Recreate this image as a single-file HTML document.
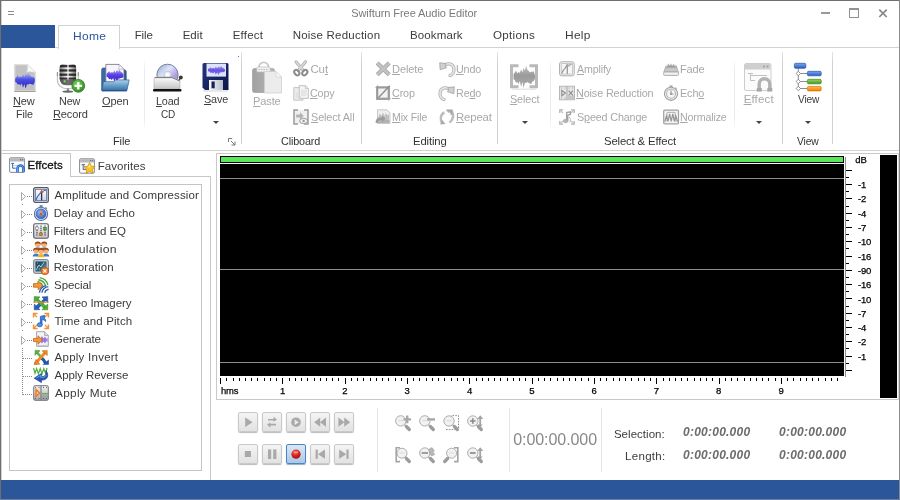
<!DOCTYPE html><html><head><meta charset="utf-8"><title>Swifturn Free Audio Editor</title>
<style>html,body{margin:0;padding:0}body{width:900px;height:500px;position:relative;overflow:hidden;background:#fff;font-family:'Liberation Sans',sans-serif;font-size:12px}u{text-decoration:underline;text-underline-offset:1px}svg{overflow:visible}</style></head><body><div id="app" style="position:absolute;left:0;top:0;width:900px;height:500px;will-change:transform">
<div style="position:absolute;left:0px;top:0px;width:900px;height:1px;background:#6f6f6f;"></div>
<div style="position:absolute;left:0px;top:0px;width:1px;height:500px;background:#6f6f6f;"></div>
<div style="position:absolute;left:1px;top:1px;width:1px;height:498px;background:rgba(120,120,120,0.35);"></div>
<div style="position:absolute;left:899px;top:0px;width:1px;height:500px;background:#8a8a8a;"></div>
<div style="position:absolute;left:0px;top:499px;width:900px;height:1px;background:#6f7f98;"></div>
<div style="position:absolute;top:3px;line-height:20px;font-size:11px;color:#7a7a7a;white-space:nowrap;left:351.24px;letter-spacing:-0.074px;">Swifturn Free Audio Editor</div>
<div style="position:absolute;left:8px;top:11px;width:6px;height:1px;background:#8c8c8c;"></div>
<div style="position:absolute;left:8px;top:14px;width:6px;height:1px;background:#8c8c8c;"></div>
<div style="position:absolute;left:821px;top:12px;width:9px;height:2px;background:#999;"></div>
<div style="position:absolute;left:849px;top:8px;width:8px;height:7px;border:1px solid #929292;border-top:2px solid #929292"></div>
<svg style="position:absolute;left:878px;top:8px" width="10" height="10" viewBox="0 0 10 10"><path d="M1.3 1.6 L8.7 9 M8.7 1.6 L1.3 9" stroke="#878787" stroke-width="1.7" fill="none"/></svg>
<div style="position:absolute;left:1px;top:25px;width:54px;height:23px;background:#2b579a;"></div>
<div style="position:absolute;left:55px;top:47px;width:844px;height:1px;background:#d2d2d2;"></div>
<div style="position:absolute;left:58px;top:25px;width:60px;height:23px;border:1px solid #d2d2d2;border-bottom:none;background:#fff"></div>
<div style="position:absolute;top:26px;line-height:20px;font-size:11.5px;color:#2b579a;white-space:nowrap;left:72.60px;letter-spacing:0.300px;transform:scaleX(1.0422);transform-origin:0 0;">Home</div>
<div style="position:absolute;top:25px;line-height:20px;font-size:11.5px;color:#3c3c3c;white-space:nowrap;left:134.64px;letter-spacing:-0.051px;">File</div>
<div style="position:absolute;top:25px;line-height:20px;font-size:11.5px;color:#3c3c3c;white-space:nowrap;left:182.64px;letter-spacing:0.072px;">Edit</div>
<div style="position:absolute;top:25px;line-height:20px;font-size:11.5px;color:#3c3c3c;white-space:nowrap;left:232.64px;letter-spacing:0.245px;">Effect</div>
<div style="position:absolute;top:25px;line-height:20px;font-size:11.5px;color:#3c3c3c;white-space:nowrap;left:292.64px;letter-spacing:0.221px;">Noise Reduction</div>
<div style="position:absolute;top:25px;line-height:20px;font-size:11.5px;color:#3c3c3c;white-space:nowrap;left:410.04px;letter-spacing:0.115px;">Bookmark</div>
<div style="position:absolute;top:25px;line-height:20px;font-size:11.5px;color:#3c3c3c;white-space:nowrap;left:493.12px;letter-spacing:0.300px;transform:scaleX(1.0095);transform-origin:0 0;">Options</div>
<div style="position:absolute;top:25px;line-height:20px;font-size:11.5px;color:#3c3c3c;white-space:nowrap;left:564.61px;letter-spacing:0.300px;transform:scaleX(1.0375);transform-origin:0 0;">Help</div>
<div style="position:absolute;left:1px;top:150px;width:898px;height:1px;background:#d2d2d2;"></div>
<div style="position:absolute;left:241px;top:52px;width:1px;height:92px;background:linear-gradient(#e4e4e4,#d0d0d0 12%,#d0d0d0);"></div>
<div style="position:absolute;left:361px;top:52px;width:1px;height:92px;background:linear-gradient(#e4e4e4,#d0d0d0 12%,#d0d0d0);"></div>
<div style="position:absolute;left:497px;top:52px;width:1px;height:92px;background:linear-gradient(#e4e4e4,#d0d0d0 12%,#d0d0d0);"></div>
<div style="position:absolute;left:782px;top:52px;width:1px;height:92px;background:linear-gradient(#e4e4e4,#d0d0d0 12%,#d0d0d0);"></div>
<div style="position:absolute;left:832px;top:52px;width:1px;height:92px;background:linear-gradient(#e4e4e4,#d0d0d0 12%,#d0d0d0);"></div>
<div style="position:absolute;left:238px;top:56px;width:1px;height:1px;background:#707070;"></div>
<div style="position:absolute;left:144px;top:59px;width:1px;height:71px;background:linear-gradient(#fff,#ececec 15%,#ececec 85%,#fff);"></div>
<div style="position:absolute;left:550px;top:59px;width:1px;height:71px;background:linear-gradient(#fff,#ececec 15%,#ececec 85%,#fff);"></div>
<div style="position:absolute;left:734px;top:59px;width:1px;height:71px;background:linear-gradient(#fff,#ececec 15%,#ececec 85%,#fff);"></div>
<div style="position:absolute;top:131px;line-height:20px;font-size:11.5px;color:#333;white-space:nowrap;left:112.68px;letter-spacing:-0.150px;transform:scaleX(0.9578);transform-origin:0 0;">File</div>
<div style="position:absolute;top:131px;line-height:20px;font-size:11.5px;color:#333;white-space:nowrap;left:281.46px;letter-spacing:-0.150px;transform:scaleX(0.9395);transform-origin:0 0;">Cliboard</div>
<div style="position:absolute;top:131px;line-height:20px;font-size:11.5px;color:#333;white-space:nowrap;left:412.66px;letter-spacing:-0.150px;transform:scaleX(0.9832);transform-origin:0 0;">Editing</div>
<div style="position:absolute;top:131px;line-height:20px;font-size:11.5px;color:#333;white-space:nowrap;left:603.93px;letter-spacing:-0.150px;transform:scaleX(0.9855);transform-origin:0 0;">Select &amp; Effect</div>
<div style="position:absolute;top:131px;line-height:20px;font-size:11.5px;color:#333;white-space:nowrap;left:796.60px;letter-spacing:-0.150px;transform:scaleX(0.8980);transform-origin:0 0;">View</div>
<svg style="position:absolute;left:228px;top:138px" width="8" height="8" viewBox="0 0 8 8"><path d="M0.5 4 V0.5 H4" stroke="#777" fill="none"/><path d="M3 3 L7 7 M7 3.5 V7 H3.5" stroke="#777" fill="none"/></svg>
<svg style="position:absolute;left:9px;top:62px" width="32" height="32" viewBox="0 0 32 32"><path d="M5.6 2.6 H18.4 L26.4 10.6 V28.6 H5.6 Z" fill="#c2c2c2" stroke="#e0e0e0" stroke-width="1.4"/><path d="M18.4 2.6 C18.8 6 18.6 8.6 17.6 10 C20.5 9.4 23.5 9.8 26.4 10.6 Z" fill="#fafafa" stroke="#d8d8d8" stroke-width=".5"/><path d="M5.4 29.3 H26.6" stroke="#8e8e8e" stroke-width="1"/><linearGradient id="gw1" x1="0" y1="0" x2="0" y2="1"><stop offset="0" stop-color="#b8c0f6"/><stop offset=".45" stop-color="#4a50e0"/><stop offset="1" stop-color="#2a22c6"/></linearGradient><path d="M6.2 16.3 L7.5 14.9 L8.8 13.3 L10.1 15.6 L11.4 14.3 L12.7 15.2 L14.0 12.3 L15.3 14.9 L16.7 11.4 L18.0 13.7 L19.3 10.3 L20.6 13.3 L21.9 14.2 L23.2 15.3 L24.5 14.8 L25.8 16.5 L25.8 19.7 L24.5 22.7 L23.2 22.4 L21.9 22.1 L20.6 21.7 L19.3 22.4 L18.0 22.3 L16.7 26.4 L15.3 21.9 L14.0 25.7 L12.7 21.3 L11.4 23.6 L10.1 22.0 L8.8 22.6 L7.5 20.4 L6.2 19.9Z" fill="url(#gw1)"/></svg>
<div style="position:absolute;top:91px;line-height:20px;font-size:11.5px;color:#3c3c3c;white-space:nowrap;left:12.68px;letter-spacing:-0.150px;transform:scaleX(0.9567);transform-origin:0 0;"><u>N</u>ew</div>
<div style="position:absolute;top:104px;line-height:20px;font-size:11.5px;color:#3c3c3c;white-space:nowrap;left:15.51px;letter-spacing:-0.150px;transform:scaleX(0.9339);transform-origin:0 0;">File</div>
<svg style="position:absolute;left:55px;top:62px" width="32" height="32" viewBox="0 0 32 32"><defs><linearGradient id="gm1" x1="0" y1="0" x2="1" y2="0"><stop offset="0" stop-color="#6a6a6a"/><stop offset=".3" stop-color="#c8c8c8"/><stop offset=".5" stop-color="#fafafa"/><stop offset=".7" stop-color="#c4c4c4"/><stop offset="1" stop-color="#5a5a5a"/></linearGradient><linearGradient id="gm2" x1="0" y1="0" x2="1" y2="0"><stop offset="0" stop-color="#1c1c1c"/><stop offset=".42" stop-color="#3a3a3a"/><stop offset=".5" stop-color="#e6e6e6"/><stop offset=".58" stop-color="#3a3a3a"/><stop offset="1" stop-color="#1c1c1c"/></linearGradient><clipPath id="cm1"><path d="M4.6 6 Q4.6 2 8.6 2 H17.1 Q21.1 2 21.1 6 V16 Q21.1 23.4 12.85 23.4 Q4.6 23.4 4.6 16 Z"/></clipPath><radialGradient id="gg1" cx=".4" cy=".35" r=".7"><stop offset="0" stop-color="#7ad060"/><stop offset="1" stop-color="#2a8a1c"/></radialGradient></defs><path d="M2.4 11 V18 C2.4 23.6 7 26.8 12.85 26.8 C18.7 26.8 23.3 23.6 23.3 18 V11" fill="none" stroke="#c2c2c2" stroke-width="1.2"/><path d="M2.4 10 V14 M23.3 10 V14" stroke="#8c8c8c" stroke-width="1"/><rect x="11.8" y="26.4" width="2.2" height="3" fill="#8a8a8a"/><ellipse cx="12.85" cy="29.6" rx="5.5" ry="1.2" fill="#6a6a6a"/><g clip-path="url(#cm1)"><rect x="4" y="1" width="18" height="23" fill="url(#gm1)"/><rect x="4" y="3" width="18" height="2.3" fill="url(#gm2)"/><rect x="4" y="7.3" width="18" height="2.3" fill="url(#gm2)"/><rect x="4" y="11.6" width="18" height="2.2" fill="url(#gm2)"/><rect x="4" y="15.6" width="18" height="2" fill="url(#gm2)"/><rect x="4" y="17.6" width="18" height="6" fill="#4a4a4a" opacity=".8"/></g><circle cx="9.6" cy="19.3" r="1.1" fill="#7ee04a"/><circle cx="23.3" cy="23.8" r="6.4" fill="url(#gg1)" stroke="#2c7a1c" stroke-width=".8"/><path d="M23.3 20 V27.6 M19.5 23.8 H27.1" stroke="#fff" stroke-width="2.3"/></svg>
<div style="position:absolute;top:91px;line-height:20px;font-size:11.5px;color:#3c3c3c;white-space:nowrap;left:58.70px;letter-spacing:-0.150px;transform:scaleX(0.9383);transform-origin:0 0;">New</div>
<div style="position:absolute;top:104px;line-height:20px;font-size:11.5px;color:#3c3c3c;white-space:nowrap;left:52.88px;letter-spacing:-0.150px;transform:scaleX(0.9592);transform-origin:0 0;"><u>R</u>ecord</div>
<svg style="position:absolute;left:99.5px;top:62px" width="32" height="32" viewBox="0 0 32 32"><defs><linearGradient id="gf1" x1="0" y1="0" x2="0" y2="1"><stop offset="0" stop-color="#b2d2e8"/><stop offset=".5" stop-color="#6aa0c8"/><stop offset="1" stop-color="#356fa8"/></linearGradient><linearGradient id="gf0" x1="0" y1="0" x2="1" y2="0"><stop offset="0" stop-color="#3c6ea4"/><stop offset="1" stop-color="#2a5a94"/></linearGradient></defs><path d="M1.7 7.6 Q1.7 6 3.2 6 H8 L9.6 8 H24.6 Q26.2 8 26.2 9.6 V28.4 H1.7 Z" fill="url(#gf0)" stroke="#234e86" stroke-width=".7"/><path d="M5.8 2.4 H19 L24 7.4 V21 H5.8 Z" fill="#f6f4fc" stroke="#6e6e78" stroke-width=".8"/><path d="M19 2.4 C19.3 4.6 19.1 6.2 18.4 7.2 C20.4 6.8 22.2 7 24 7.4 Z" fill="#fff" stroke="#8a8a94" stroke-width=".5"/><linearGradient id="gw2" x1="0" y1="0" x2="0" y2="1"><stop offset="0" stop-color="#b0a8f4"/><stop offset=".45" stop-color="#5a3ee0"/><stop offset="1" stop-color="#3a24cc"/></linearGradient><path d="M6.6 11.8 L7.9 10.6 L9.2 9.2 L10.5 11.1 L11.8 10.0 L13.1 10.8 L14.4 8.4 L15.6 10.7 L16.9 7.8 L18.2 9.8 L19.5 7.4 L20.8 9.8 L22.1 10.6 L23.4 12.3 L23.4 15.0 L22.1 16.1 L20.8 16.0 L19.5 16.6 L18.2 16.7 L16.9 20.0 L15.6 16.5 L14.4 19.8 L13.1 16.1 L11.8 18.1 L10.5 16.7 L9.2 17.2 L7.9 15.3 L6.6 14.8Z" fill="url(#gw2)"/><path d="M3.4 19.7 H14 L15.6 17.9 H29.2 L26.9 28.6 H1.9 Z" fill="url(#gf1)" stroke="#2a5f9a" stroke-width=".7"/><path d="M2 28.9 H26.8" stroke="#1f4a82" stroke-width=".9"/></svg>
<div style="position:absolute;top:91px;line-height:20px;font-size:11.5px;color:#3c3c3c;white-space:nowrap;left:102.14px;letter-spacing:-0.150px;transform:scaleX(0.9592);transform-origin:0 0;"><u>O</u>pen</div>
<svg style="position:absolute;left:152px;top:62px" width="32" height="32" viewBox="0 0 32 32"><defs><linearGradient id="gcd" x1="0" y1="0" x2="1" y2="1"><stop offset="0" stop-color="#8fa2d2"/><stop offset=".4" stop-color="#dfe6f8"/><stop offset=".7" stop-color="#b09ee6"/><stop offset="1" stop-color="#7f92cc"/></linearGradient><linearGradient id="gbx" x1="0" y1="0" x2="0" y2="1"><stop offset="0" stop-color="#ffffff"/><stop offset="1" stop-color="#c4c4c4"/></linearGradient></defs><circle cx="15.5" cy="12.8" r="10.6" fill="url(#gcd)" stroke="#76809e" stroke-width="1"/><circle cx="15.5" cy="12.8" r="3.6" fill="#e8ecf8" stroke="#a8b4d8" stroke-width=".6"/><circle cx="15.5" cy="12.8" r="1.8" fill="#fff"/><path d="M25.5 20 L28.6 15.6" stroke="#333" stroke-width="1.3"/><circle cx="28.8" cy="15.4" r="2" fill="#3a3a3a"/><path d="M2 17.5 Q2 15 4.5 15 H20 L28 18.5 V27 H2 Z" fill="url(#gbx)" stroke="#b4b4b4" stroke-width=".7"/><path d="M2.6 15.6 H20 L27.8 19" fill="none" stroke="#6a6a6a" stroke-width=".9"/><rect x="1" y="27" width="28.5" height="2.6" rx="1" fill="#111"/></svg>
<div style="position:absolute;top:91px;line-height:20px;font-size:11.5px;color:#3c3c3c;white-space:nowrap;left:156.10px;letter-spacing:-0.150px;transform:scaleX(0.9397);transform-origin:0 0;"><u>L</u>oad</div>
<div style="position:absolute;top:104px;line-height:20px;font-size:11.5px;color:#3c3c3c;white-space:nowrap;left:161.10px;letter-spacing:-0.150px;transform:scaleX(0.8715);transform-origin:0 0;">CD</div>
<svg style="position:absolute;left:199.5px;top:62px" width="32" height="32" viewBox="0 0 32 32"><defs><linearGradient id="gsv" x1="0" y1="0" x2="1" y2="1"><stop offset="0" stop-color="#24347e"/><stop offset="1" stop-color="#0c164a"/></linearGradient><linearGradient id="gsh" x1="0" y1="0" x2="1" y2="0"><stop offset="0" stop-color="#fafafa"/><stop offset="1" stop-color="#b9bcc6"/></linearGradient></defs><path d="M2.5 2.5 Q2.5 1 4 1 H27 Q28.5 1 28.5 2.5 V28 H5 L2.5 25.5 Z" fill="url(#gsv)"/><rect x="6.5" y="1.6" width="19.5" height="13" fill="#dde3f9"/><linearGradient id="gw3" x1="0" y1="0" x2="0" y2="1"><stop offset="0" stop-color="#b0a8f2"/><stop offset=".45" stop-color="#6a50e2"/><stop offset="1" stop-color="#8078e6"/></linearGradient><path d="M8.0 7.0 L9.3 6.2 L10.6 5.2 L11.9 6.6 L13.2 5.8 L14.5 6.4 L15.8 4.6 L17.2 6.2 L18.5 4.2 L19.8 5.6 L21.1 3.9 L22.4 5.6 L23.7 6.2 L25.0 7.4 L25.0 9.3 L23.7 10.2 L22.4 10.0 L21.1 10.5 L19.8 10.5 L18.5 12.9 L17.2 10.4 L15.8 12.8 L14.5 10.1 L13.2 11.5 L11.9 10.6 L10.6 10.9 L9.3 9.5 L8.0 9.2Z" fill="url(#gw3)"/><rect x="9" y="18" width="14" height="10" fill="url(#gsh)"/><rect x="11.5" y="19.5" width="3.2" height="6.8" fill="#16215c"/><path d="M3 29 H28" stroke="#c0c4d0" stroke-width="1" opacity=".7"/></svg>
<div style="position:absolute;top:89px;line-height:20px;font-size:11.5px;color:#3c3c3c;white-space:nowrap;left:203.55px;letter-spacing:-0.150px;transform:scaleX(0.9416);transform-origin:0 0;"><u>S</u>ave</div>
<svg style="position:absolute;left:212.5px;top:121.0px" width="6" height="3" viewBox="0 0 6 3"><path d="M0 0 H6 L3 3 Z" fill="#444"/></svg>
<svg style="position:absolute;left:250.5px;top:62px" width="32" height="32" viewBox="0 0 32 32"><defs><linearGradient id="gps" x1="0" y1="0" x2="1" y2="0"><stop offset="0" stop-color="#a0a0a0"/><stop offset="1" stop-color="#b6b6b6"/></linearGradient></defs><rect x="1.5" y="6.5" width="22" height="24" rx="2" fill="url(#gps)" stroke="#a4a4a4" stroke-width=".8"/><path d="M8 5 A4.7 4.7 0 0 1 17.4 5" fill="none" stroke="#cacaca" stroke-width="1.8"/><rect x="5.8" y="5" width="13.5" height="5" rx="1" fill="#f0f0f0" stroke="#bcbcbc" stroke-width=".7"/><path d="M7.5 7.5 H17.8" stroke="#bdbdbd" stroke-width="1" stroke-dasharray="1.5 1"/><path d="M13.5 9.5 H25 L30.5 15 V31 H13.5 Z" fill="#ececec" stroke="#cfcfcf" stroke-width=".8"/><path d="M25 9.5 V15 H30.5 Z" fill="#fafafa" stroke="#cfcfcf" stroke-width=".6"/></svg>
<div style="position:absolute;top:91px;line-height:20px;font-size:11.5px;color:#a8a8a8;white-space:nowrap;left:252.68px;letter-spacing:-0.150px;transform:scaleX(0.9641);transform-origin:0 0;"><u>P</u>aste</div>
<svg style="position:absolute;left:509px;top:62px" width="32" height="32" viewBox="0 0 32 32"><path d="M9.5 3.7 H2.5 V24.7 H9.5" fill="none" stroke="#b9b9b9" stroke-width="3"/><path d="M20.5 3.7 H27.5 V24.7 H20.5" fill="none" stroke="#b9b9b9" stroke-width="3"/><path d="M3 27.2 H27" stroke="#dcdcdc" stroke-width="1"/><linearGradient id="gw4" x1="0" y1="0" x2="0" y2="1"><stop offset="0" stop-color="#bdbdbd"/><stop offset=".45" stop-color="#9a9a9a"/><stop offset="1" stop-color="#b0b0b0"/></linearGradient><path d="M4.5 12.3 L5.8 10.6 L7.0 8.5 L8.3 11.6 L9.6 9.8 L10.8 11.0 L12.1 7.2 L13.4 10.5 L14.6 5.7 L15.9 8.7 L17.1 3.8 L18.4 7.8 L19.7 9.0 L20.9 10.4 L22.2 9.5 L23.5 10.1 L24.7 9.1 L26.0 13.5 L26.0 16.7 L24.7 19.1 L23.5 19.2 L22.2 22.3 L20.9 21.5 L19.7 20.9 L18.4 20.1 L17.1 20.9 L15.9 20.8 L14.6 26.2 L13.4 20.0 L12.1 25.1 L10.8 19.1 L9.6 22.2 L8.3 20.0 L7.0 20.8 L5.8 18.0 L4.5 17.3Z" fill="url(#gw4)"/></svg>
<div style="position:absolute;top:89px;line-height:20px;font-size:11.5px;color:#a8a8a8;white-space:nowrap;left:510.15px;letter-spacing:-0.150px;transform:scaleX(0.9451);transform-origin:0 0;"><u>S</u>elect</div>
<svg style="position:absolute;left:522px;top:121.0px" width="6" height="3" viewBox="0 0 6 3"><path d="M0 0 H6 L3 3 Z" fill="#444"/></svg>
<svg style="position:absolute;left:743px;top:62px" width="32" height="32" viewBox="0 0 32 32"><rect x="1.5" y="1.5" width="26.5" height="27" rx="1.5" fill="#fbfbfb" stroke="#cdcdcd"/><path d="M2 7.5 V3 Q2 2 3 2 H26.5 Q27.5 2 27.5 3 V7.5 Z" fill="#cfcfcf"/><rect x="20" y="3.6" width="1.8" height="1.8" fill="#9d9d9d"/><rect x="23.6" y="3.6" width="1.8" height="1.8" fill="#9d9d9d"/><path d="M5 11.5 H10 M7.5 12 V18.5 H12 M7.5 13.5 H24" stroke="#c0c0c0" stroke-width="1" fill="none"/><path d="M16.2 28 V22 A5.3 5.3 0 0 1 26.8 22 V28" fill="none" stroke="#b2b2b2" stroke-width="3.4"/><rect x="13.8" y="26" width="5" height="3.6" fill="#a8a8a8"/><rect x="24.3" y="26" width="5" height="3.6" fill="#a8a8a8"/></svg>
<div style="position:absolute;top:89px;line-height:20px;font-size:11.5px;color:#a8a8a8;white-space:nowrap;left:743.64px;letter-spacing:0.165px;"><u>E</u>ffect</div>
<svg style="position:absolute;left:756px;top:121.0px" width="6" height="3" viewBox="0 0 6 3"><path d="M0 0 H6 L3 3 Z" fill="#444"/></svg>
<svg style="position:absolute;left:792px;top:62px" width="32" height="32" viewBox="0 0 32 32"><defs><linearGradient id="gvb" x1="0" y1="0" x2="0" y2="1"><stop offset="0" stop-color="#7aa8ee"/><stop offset="1" stop-color="#2a5cc0"/></linearGradient><linearGradient id="gvg" x1="0" y1="0" x2="0" y2="1"><stop offset="0" stop-color="#9ad860"/><stop offset="1" stop-color="#3e9a1e"/></linearGradient><linearGradient id="gvo" x1="0" y1="0" x2="0" y2="1"><stop offset="0" stop-color="#ffc050"/><stop offset="1" stop-color="#f08000"/></linearGradient></defs><path d="M6.3 6.5 V26.5 M6.3 11.5 H15 M6.3 19.5 H15 M6.3 26.5 H15" stroke="#808080" stroke-width=".9" fill="none"/><rect x="2.4" y="1.3" width="11.4" height="5" rx="1.2" fill="url(#gvb)" stroke="#2450a8" stroke-width=".7"/><rect x="15.4" y="9.3" width="13.8" height="4.5" rx="1.2" fill="url(#gvb)" stroke="#2450a8" stroke-width=".7"/><rect x="15.4" y="17.3" width="13.8" height="4.5" rx="1.2" fill="url(#gvg)" stroke="#35851a" stroke-width=".7"/><rect x="15.4" y="24.4" width="13.8" height="4.5" rx="1.2" fill="url(#gvo)" stroke="#d87000" stroke-width=".7"/><path d="M6.3 9.3 L8.5 11.5 L6.3 13.7 L4.1 11.5 Z M6.3 17.3 L8.5 19.5 L6.3 21.7 L4.1 19.5 Z M6.3 24.3 L8.5 26.5 L6.3 28.7 L4.1 26.5 Z" fill="#fff" stroke="#777" stroke-width=".8"/></svg>
<div style="position:absolute;top:89px;line-height:20px;font-size:11.5px;color:#3c3c3c;white-space:nowrap;left:797.60px;letter-spacing:-0.150px;transform:scaleX(0.8816);transform-origin:0 0;">View</div>
<svg style="position:absolute;left:805px;top:121.0px" width="6" height="3" viewBox="0 0 6 3"><path d="M0 0 H6 L3 3 Z" fill="#444"/></svg>
<svg style="position:absolute;left:293px;top:61px" width="16" height="16" viewBox="0 0 16 16"><path d="M3 0.8 L10.4 9.6 M12.6 0.8 L5.2 9.6" stroke="#a8a8a8" stroke-width="3" stroke-linecap="round"/><path d="M3 0.8 L10.4 9.6 M12.6 0.8 L5.2 9.6" stroke="#dcdcdc" stroke-width="1.5" stroke-linecap="round"/><ellipse cx="3.8" cy="11.6" rx="2.2" ry="3" fill="none" stroke="#8c8c8c" stroke-width="2" transform="rotate(-40 3.8 11.6)"/><ellipse cx="11.8" cy="11.6" rx="2.2" ry="3" fill="none" stroke="#8c8c8c" stroke-width="2" transform="rotate(40 11.8 11.6)"/></svg>
<div style="position:absolute;top:59px;line-height:20px;font-size:11.5px;color:#a8a8a8;white-space:nowrap;left:310.43px;letter-spacing:-0.125px;">Cu<u>t</u></div>
<svg style="position:absolute;left:293px;top:85px" width="16" height="16" viewBox="0 0 16 16"><path d="M0.8 2.6 H7 L10 5.6 V15.2 H0.8 Z" fill="#ededed" stroke="#bdbdbd" stroke-width=".9"/><path d="M6.2 0.6 H12.4 L15.4 3.6 V13.4 H6.2 Z" fill="#f3f3f3" stroke="#bdbdbd" stroke-width=".9"/><path d="M12.4 0.6 V3.6 H15.4" fill="none" stroke="#bdbdbd" stroke-width=".8"/><path d="M8 6 H13.5 M8 8 H13.5 M8 10 H13.5 M2.5 8 H5 M2.5 10 H5 M2.5 12 H8" stroke="#d6d6d6" stroke-width=".9"/></svg>
<div style="position:absolute;top:83px;line-height:20px;font-size:11.5px;color:#a8a8a8;white-space:nowrap;left:310.47px;letter-spacing:-0.150px;transform:scaleX(0.9299);transform-origin:0 0;"><u>C</u>opy</div>
<svg style="position:absolute;left:293px;top:109px" width="16" height="16" viewBox="0 0 16 16"><rect x="1" y="1" width="14" height="14" fill="#efefef"/><path d="M5 1 H1 V15 H5 M11 1 H15 V15 H11" fill="none" stroke="#9c9c9c" stroke-width="1.5"/><path d="M3.2 5.5 H7 V3.2 L10.8 7 L7 10.8 V8.5 H3.2 Z" fill="#b4b4b4"/><ellipse cx="10.6" cy="12" rx="4" ry="2.6" fill="#f6f6f6" stroke="#9c9c9c" stroke-width="1"/><circle cx="10.6" cy="12" r="1.2" fill="#9c9c9c"/></svg>
<div style="position:absolute;top:107px;line-height:20px;font-size:11.5px;color:#a8a8a8;white-space:nowrap;left:310.55px;letter-spacing:-0.150px;transform:scaleX(0.9476);transform-origin:0 0;"><u>S</u>elect All</div>
<svg style="position:absolute;left:375px;top:61px" width="16" height="16" viewBox="0 0 16 16"><path d="M2.2 2 L14.2 13.8 M14.2 2 L2.2 13.8" stroke="#a4a4a4" stroke-width="4.2"/><path d="M2.2 2 L14.2 13.8 M14.2 2 L2.2 13.8" stroke="#c2c2c2" stroke-width="2.6"/></svg>
<div style="position:absolute;top:59px;line-height:20px;font-size:11.5px;color:#a8a8a8;white-space:nowrap;left:392.07px;letter-spacing:-0.150px;transform:scaleX(0.9657);transform-origin:0 0;"><u>D</u>elete</div>
<svg style="position:absolute;left:375px;top:85px" width="16" height="16" viewBox="0 0 16 16"><path d="M0.4 2.4 H3 M2.6 0.2 V3" stroke="#aaa" stroke-width="1"/><rect x="2.2" y="2.4" width="11.6" height="11.4" fill="#f2f2f2" stroke="#9a9a9a" stroke-width="2.2"/><path d="M3.4 12.8 L14.8 0.8" stroke="#8e8e8e" stroke-width="1.4"/><path d="M13.8 13.6 H15.8 M13.6 13.6 V15.6" stroke="#aaa" stroke-width="1"/></svg>
<div style="position:absolute;top:83px;line-height:20px;font-size:11.5px;color:#a8a8a8;white-space:nowrap;left:392.46px;letter-spacing:-0.150px;transform:scaleX(0.9397);transform-origin:0 0;"><u>C</u>rop</div>
<svg style="position:absolute;left:375px;top:109px" width="16" height="16" viewBox="0 0 16 16"><path d="M2.5 0.8 H12 L15 3.8 V14.5 H2.5 Z" fill="#efefef" stroke="#c4c4c4" stroke-width=".9"/><path d="M3.5 7.5 L5 4.5 L6.5 7 L8 3.5 L9.5 7 L11 4 L12.5 6.5 L14 5 V11 H3.5 Z" fill="#c0c0c0"/><path d="M3 11 H14.5 V14 H3 Z" fill="#b2b2b2"/><path d="M0.6 13.5 C0.6 9 4 8 7 8.6 V6.6 L10.6 9.8 L7 13 V11 C4.5 10.6 2.5 11.5 2.6 14.6 Z" fill="#9c9c9c"/></svg>
<div style="position:absolute;top:107px;line-height:20px;font-size:11.5px;color:#a8a8a8;white-space:nowrap;left:392.12px;letter-spacing:-0.150px;transform:scaleX(0.9143);transform-origin:0 0;"><u>M</u>ix File</div>
<svg style="position:absolute;left:439px;top:61px" width="16" height="16" viewBox="0 0 16 16"><path d="M5.6 4.6 C8.6 1.2 15 2.8 15 8.4 C15 11.6 13.4 13.6 11 14.6" fill="none" stroke="#b2b2b2" stroke-width="3.2" stroke-linecap="round"/><path d="M5.6 4.6 C8.6 1.2 15 2.8 15 8.4 C15 11.6 13.4 13.6 11 14.6" fill="none" stroke="#e6e6e6" stroke-width="1.6" stroke-linecap="round"/><path d="M0.7 1.8 L7.2 2.6 L6.2 5 L7.6 6.6 L1.2 8.8 Z" fill="#d0d0d0" stroke="#a8a8a8" stroke-width=".9"/></svg>
<div style="position:absolute;top:59px;line-height:20px;font-size:11.5px;color:#a8a8a8;white-space:nowrap;left:456.19px;letter-spacing:-0.150px;transform:scaleX(0.9334);transform-origin:0 0;"><u>U</u>ndo</div>
<svg style="position:absolute;left:439px;top:85px" width="16" height="16" viewBox="0 0 16 16"><g transform="translate(16 0) scale(-1 1)"><path d="M5.6 4.6 C8.6 1.2 15 2.8 15 8.4 C15 11.6 13.4 13.6 11 14.6" fill="none" stroke="#b2b2b2" stroke-width="3.2" stroke-linecap="round"/><path d="M5.6 4.6 C8.6 1.2 15 2.8 15 8.4 C15 11.6 13.4 13.6 11 14.6" fill="none" stroke="#e6e6e6" stroke-width="1.6" stroke-linecap="round"/><path d="M0.7 1.8 L7.2 2.6 L6.2 5 L7.6 6.6 L1.2 8.8 Z" fill="#d0d0d0" stroke="#a8a8a8" stroke-width=".9"/></g></svg>
<div style="position:absolute;top:83px;line-height:20px;font-size:11.5px;color:#a8a8a8;white-space:nowrap;left:456.10px;letter-spacing:-0.150px;transform:scaleX(0.9369);transform-origin:0 0;">Re<u>d</u>o</div>
<svg style="position:absolute;left:439px;top:109px" width="16" height="16" viewBox="0 0 16 16"><path d="M3.4 14 C0.6 10.5 1.4 5.5 5.4 3.4" fill="none" stroke="#bdbdbd" stroke-width="2.4"/><path d="M1.2 15.4 L6.6 15 L2.8 10.6 Z" fill="#ababab"/><path d="M9 2.6 H13 C14.6 6 14.4 10.5 10.4 13.6" fill="none" stroke="#bdbdbd" stroke-width="2.4"/><path d="M7.4 0.4 H13.6 V5.8 H11.4 V2.6 H7.4 Z" fill="#a8a8a8"/></svg>
<div style="position:absolute;top:107px;line-height:20px;font-size:11.5px;color:#a8a8a8;white-space:nowrap;left:456.05px;letter-spacing:-0.150px;transform:scaleX(0.9893);transform-origin:0 0;"><u>R</u>epeat</div>
<svg style="position:absolute;left:559px;top:61px" width="16" height="16" viewBox="0 0 16 16"><rect x="0.6" y="0.8" width="14.6" height="14" rx="2" fill="#f7f7f7" stroke="#ababab" stroke-width="1"/><rect x="2.3" y="2.5" width="11.2" height="10.6" fill="none" stroke="#c4c4c4" stroke-width=".9"/><path d="M2.6 12.8 C5 7 8 4 12.6 3.4" fill="none" stroke="#a0a0a0" stroke-width="1.2"/><path d="M8.3 4.4 V13" stroke="#9a9a9a" stroke-width="1.3"/><path d="M6.4 5.8 L8.3 3 L10.2 5.8" fill="none" stroke="#a2a2a2" stroke-width="1"/></svg>
<div style="position:absolute;top:59px;line-height:20px;font-size:11.5px;color:#a8a8a8;white-space:nowrap;left:577.00px;letter-spacing:-0.150px;transform:scaleX(0.9249);transform-origin:0 0;"><u>A</u>mplify</div>
<svg style="position:absolute;left:559px;top:85px" width="16" height="16" viewBox="0 0 16 16"><rect x="0.5" y="1.2" width="15" height="13.6" fill="#e6e6e6" stroke="#b2b2b2" stroke-width=".9"/><path d="M8 1.2 V14.8" stroke="#a8a8a8" stroke-width="1"/><path d="M2.8 5.4 L6.4 8.1 L2.8 10.8 Z" fill="none" stroke="#8e8e8e" stroke-width="1.1"/><path d="M9.6 5.6 L14 10.6 M14 5.6 L9.6 10.6" stroke="#8e8e8e" stroke-width="1.1"/><path d="M2 3 h.9 M5.6 3 h.9 M9.6 3 h.9 M13 3 h.9 M2 13 h.9 M5.6 13 h.9 M9.6 13 h.9 M13 13 h.9" stroke="#9a9a9a" stroke-width=".9"/><rect x="8.5" y="11" width="6.5" height="3.4" fill="#c6c6c6"/></svg>
<div style="position:absolute;top:83px;line-height:20px;font-size:11.5px;color:#a8a8a8;white-space:nowrap;left:576.10px;letter-spacing:-0.150px;transform:scaleX(0.9429);transform-origin:0 0;"><u>N</u>oise Reduction</div>
<svg style="position:absolute;left:559px;top:109px" width="16" height="16" viewBox="0 0 16 16"><path d="M0.8 4 V0.8 H4 M12 0.8 H15.2 V4 M15.2 12 V15.2 H12 M4 15.2 H0.8 V12" fill="none" stroke="#b4b4b4" stroke-width="1.3"/><path d="M1 1 L4 4 M15 1 L12 4 M15 15 L12 12 M1 15 L4 12" stroke="#c0c0c0" stroke-width="1.1"/><path d="M7.6 11.6 V3.6 L11.4 2.8 V5.4 L8.8 6 V12" fill="none" stroke="#a2a2a2" stroke-width="1.3"/><ellipse cx="6.6" cy="12" rx="2.3" ry="1.8" fill="#b4b4b4" stroke="#a0a0a0" stroke-width=".6"/><path d="M10 8 C12 9 12 12 10.4 13.4" fill="none" stroke="#bcbcbc" stroke-width="1"/></svg>
<div style="position:absolute;top:107px;line-height:20px;font-size:11.5px;color:#a8a8a8;white-space:nowrap;left:576.55px;letter-spacing:-0.150px;transform:scaleX(0.9359);transform-origin:0 0;">S<u>p</u>eed Change</div>
<svg style="position:absolute;left:663px;top:61px" width="16" height="16" viewBox="0 0 16 16"><path d="M1.6 9.6 L2.4 4.4 L3.2 6.4 L4 3 L4.8 5.6 L5.6 2.2 L6.4 5 L7.2 2.6 L8 5.2 L8.8 2.4 L9.6 5.2 L10.4 2.6 L11.2 5.6 L12 3 L12.8 6 L13.6 4 L14.6 9.6 Z" fill="#9c9c9c"/><path d="M2.4 6.6 H13.8 L15.4 11 H0.8 Z" fill="#c8c8c8" stroke="#a6a6a6" stroke-width=".7"/><rect x="0.7" y="11" width="14.8" height="3.4" rx=".8" fill="#f0f0f0" stroke="#a6a6a6" stroke-width=".9"/></svg>
<div style="position:absolute;top:59px;line-height:20px;font-size:11.5px;color:#a8a8a8;white-space:nowrap;left:679.68px;letter-spacing:-0.150px;transform:scaleX(0.9602);transform-origin:0 0;">Fade</div>
<svg style="position:absolute;left:663px;top:85px" width="16" height="16" viewBox="0 0 16 16"><rect x="6.6" y="0.4" width="3" height="2" fill="#a8a8a8"/><path d="M12.2 2.6 L13.6 4" stroke="#a8a8a8" stroke-width="1.2"/><circle cx="8" cy="8.8" r="6.6" fill="#e9e9e9" stroke="#a4a4a4" stroke-width="1.1"/><circle cx="8" cy="8.8" r="4.5" fill="#f6f6f6" stroke="#b6b6b6" stroke-width="1.1"/><path d="M8 5.6 V9 H10.6" fill="none" stroke="#9a9a9a" stroke-width="1.2"/><circle cx="8" cy="9" r="1.1" fill="#9a9a9a"/></svg>
<div style="position:absolute;top:83px;line-height:20px;font-size:11.5px;color:#a8a8a8;white-space:nowrap;left:679.70px;letter-spacing:-0.150px;transform:scaleX(0.9438);transform-origin:0 0;">Ech<u>o</u></div>
<svg style="position:absolute;left:663px;top:109px" width="16" height="16" viewBox="0 0 16 16"><rect x="0.7" y="1.2" width="14.8" height="13.6" rx="1" fill="#f4f4f4" stroke="#a2a2a2" stroke-width="1.2"/><path d="M2.4 12 H4 V3.4 H12.2 V12 H13.8" fill="none" stroke="#b4b4b4" stroke-width="1"/><path d="M1.6 12.6 L3.4 7 L5 12.4 L6.6 5 L8.2 12.4 L9.8 5 L11.4 12.4 L12.8 7 L14.6 12.6" fill="none" stroke="#969696" stroke-width="1.2"/></svg>
<div style="position:absolute;top:107px;line-height:20px;font-size:11.5px;color:#a8a8a8;white-space:nowrap;left:679.71px;letter-spacing:-0.150px;transform:scaleX(0.9244);transform-origin:0 0;"><u>N</u>ormalize</div>
<div style="position:absolute;left:1px;top:153px;width:70px;height:1px;background:#c9c9c9;"></div>
<div style="position:absolute;left:70px;top:153px;width:1px;height:24px;background:#c9c9c9;"></div>
<div style="position:absolute;left:70px;top:176px;width:141px;height:1px;background:#c9c9c9;"></div>
<div style="position:absolute;left:210px;top:176px;width:1px;height:304px;background:#c9c9c9;"></div>
<svg style="position:absolute;left:9px;top:157px" width="16" height="16" viewBox="0 0 16 16"><rect x="0.6" y="0.8" width="14.8" height="14.6" rx="1.2" fill="#fbfcfe" stroke="#868a92" stroke-width="1"/><path d="M1.1 4.4 V2 Q1.1 1.3 1.8 1.3 H14.2 Q14.9 1.3 14.9 2 V4.4 Z" fill="#b6b8bc"/><rect x="11" y="2.2" width="1.1" height="1.1" fill="#5a6278"/><rect x="12.9" y="2.2" width="1.1" height="1.1" fill="#5a6278"/><path d="M2.2 6.4 H5 M3.6 6.6 V11.2 H6.8" fill="none" stroke="#3a66b4" stroke-width="1"/><path d="M4 8.6 H10" stroke="#b8c0d0" stroke-width=".8"/><path d="M8.5 15.2 V11.5 A2.95 2.95 0 0 1 14.4 11.5 V15.2" fill="none" stroke="#1f5cc0" stroke-width="2.6"/><path d="M8.5 15.2 V11.5 A2.95 2.95 0 0 1 14.4 11.5 V15.2" fill="none" stroke="#6fb0f4" stroke-width=".9"/></svg>
<div style="position:absolute;top:155px;line-height:20px;font-size:11.5px;color:#111;white-space:nowrap;-webkit-text-stroke:0.3px #111;left:27.54px;letter-spacing:0.060px;">Effcets</div>
<svg style="position:absolute;left:79px;top:158px" width="16" height="16" viewBox="0 0 16 16"><rect x="0.6" y="0.8" width="14.8" height="14.4" rx="1.2" fill="#fcfcfc" stroke="#888a90" stroke-width="1"/><path d="M1.1 4.4 V2 Q1.1 1.3 1.8 1.3 H14.2 Q14.9 1.3 14.9 2 V4.4 Z" fill="#b8b8bc"/><rect x="11" y="2" width="1.2" height="1.2" fill="#77797e"/><rect x="13" y="2" width="1.2" height="1.2" fill="#77797e"/><path d="M2.6 6.6 H6 M4.2 6.8 V11.4 H7" fill="none" stroke="#6a7690" stroke-width="1.1"/><path d="M10.6 4.6 L12.3 8.2 L16.2 8.7 L13.4 11.4 L14.1 15.3 L10.6 13.4 L7.1 15.3 L7.8 11.4 L5 8.7 L8.9 8.2 Z" fill="#f6c626" stroke="#c8921a" stroke-width=".8"/><path d="M10.6 6.4 L11.7 9 L9 9.4 Z" fill="#fff0a0"/></svg>
<div style="position:absolute;top:156px;line-height:20px;font-size:11.5px;color:#3c3c3c;white-space:nowrap;left:97.64px;letter-spacing:0.062px;">Favorites</div>
<div style="position:absolute;left:9px;top:184px;width:193px;height:287px;border:1px solid #c4c4c4;box-sizing:border-box"></div>
<svg style="position:absolute;left:0;top:0" width="210" height="480" viewBox="0 0 210 480">
<rect x="22" y="204" width="1" height="1" fill="#8a8a8a"/>
<rect x="22" y="222" width="1" height="1" fill="#8a8a8a"/>
<rect x="22" y="240" width="1" height="1" fill="#8a8a8a"/>
<rect x="22" y="258" width="1" height="1" fill="#8a8a8a"/>
<rect x="22" y="276" width="1" height="1" fill="#8a8a8a"/>
<rect x="22" y="294" width="1" height="1" fill="#8a8a8a"/>
<rect x="22" y="312" width="1" height="1" fill="#8a8a8a"/>
<rect x="22" y="330" width="1" height="1" fill="#8a8a8a"/>
<path d="M22.5 348 V395" stroke="#8a8a8a" stroke-width="1" stroke-dasharray="1 1" fill="none"/>
<path d="M27 196.5 H33" stroke="#8a8a8a" stroke-width="1" stroke-dasharray="1 1" fill="none"/>
<path d="M21.5 192.5 L25.5 196.5 L21.5 200.5 Z" fill="#fff" stroke="#a8a8a8" stroke-width="1"/>
<path d="M27 214.5 H33" stroke="#8a8a8a" stroke-width="1" stroke-dasharray="1 1" fill="none"/>
<path d="M21.5 210.5 L25.5 214.5 L21.5 218.5 Z" fill="#fff" stroke="#a8a8a8" stroke-width="1"/>
<path d="M27 232.5 H33" stroke="#8a8a8a" stroke-width="1" stroke-dasharray="1 1" fill="none"/>
<path d="M21.5 228.5 L25.5 232.5 L21.5 236.5 Z" fill="#fff" stroke="#a8a8a8" stroke-width="1"/>
<path d="M27 250.5 H33" stroke="#8a8a8a" stroke-width="1" stroke-dasharray="1 1" fill="none"/>
<path d="M21.5 246.5 L25.5 250.5 L21.5 254.5 Z" fill="#fff" stroke="#a8a8a8" stroke-width="1"/>
<path d="M27 268.5 H33" stroke="#8a8a8a" stroke-width="1" stroke-dasharray="1 1" fill="none"/>
<path d="M21.5 264.5 L25.5 268.5 L21.5 272.5 Z" fill="#fff" stroke="#a8a8a8" stroke-width="1"/>
<path d="M27 286.5 H33" stroke="#8a8a8a" stroke-width="1" stroke-dasharray="1 1" fill="none"/>
<path d="M21.5 282.5 L25.5 286.5 L21.5 290.5 Z" fill="#fff" stroke="#a8a8a8" stroke-width="1"/>
<path d="M27 304.5 H33" stroke="#8a8a8a" stroke-width="1" stroke-dasharray="1 1" fill="none"/>
<path d="M21.5 300.5 L25.5 304.5 L21.5 308.5 Z" fill="#fff" stroke="#a8a8a8" stroke-width="1"/>
<path d="M27 322.5 H33" stroke="#8a8a8a" stroke-width="1" stroke-dasharray="1 1" fill="none"/>
<path d="M21.5 318.5 L25.5 322.5 L21.5 326.5 Z" fill="#fff" stroke="#a8a8a8" stroke-width="1"/>
<path d="M27 340.5 H33" stroke="#8a8a8a" stroke-width="1" stroke-dasharray="1 1" fill="none"/>
<path d="M21.5 336.5 L25.5 340.5 L21.5 344.5 Z" fill="#fff" stroke="#a8a8a8" stroke-width="1"/>
<path d="M23 358.5 H33" stroke="#8a8a8a" stroke-width="1" stroke-dasharray="1 1" fill="none"/>
<path d="M23 376.5 H33" stroke="#8a8a8a" stroke-width="1" stroke-dasharray="1 1" fill="none"/>
<path d="M23 394.5 H33" stroke="#8a8a8a" stroke-width="1" stroke-dasharray="1 1" fill="none"/>
</svg>
<div style="position:absolute;left:10px;top:185px;width:188.8px;height:285px;overflow:hidden">
<div style="position:absolute;top:0px;line-height:20px;font-size:11.5px;color:#3a3a3a;white-space:nowrap;left:44.60px;letter-spacing:0.094px;">Amplitude and Compression</div>
<div style="position:absolute;top:18px;line-height:20px;font-size:11.5px;color:#3a3a3a;white-space:nowrap;left:43.64px;letter-spacing:0.005px;">Delay and Echo</div>
<div style="position:absolute;top:36px;line-height:20px;font-size:11.5px;color:#3a3a3a;white-space:nowrap;left:43.64px;letter-spacing:-0.082px;">Filters and EQ</div>
<div style="position:absolute;top:54px;line-height:20px;font-size:11.5px;color:#3a3a3a;white-space:nowrap;left:43.58px;letter-spacing:0.300px;transform:scaleX(1.0624);transform-origin:0 0;">Modulation</div>
<div style="position:absolute;top:72px;line-height:20px;font-size:11.5px;color:#3a3a3a;white-space:nowrap;left:43.64px;letter-spacing:0.128px;">Restoration</div>
<div style="position:absolute;top:90px;line-height:20px;font-size:11.5px;color:#3a3a3a;white-space:nowrap;left:44.12px;letter-spacing:-0.085px;">Special</div>
<div style="position:absolute;top:108px;line-height:20px;font-size:11.5px;color:#3a3a3a;white-space:nowrap;left:44.12px;letter-spacing:-0.100px;">Stereo Imagery</div>
<div style="position:absolute;top:126px;line-height:20px;font-size:11.5px;color:#3a3a3a;white-space:nowrap;left:44.41px;letter-spacing:0.113px;">Time and Pitch</div>
<div style="position:absolute;top:144px;line-height:20px;font-size:11.5px;color:#3a3a3a;white-space:nowrap;left:44.02px;letter-spacing:-0.137px;">Generate</div>
<div style="position:absolute;top:162px;line-height:20px;font-size:11.5px;color:#3a3a3a;white-space:nowrap;left:44.60px;letter-spacing:0.249px;">Apply Invert</div>
<div style="position:absolute;top:180px;line-height:20px;font-size:11.5px;color:#3a3a3a;white-space:nowrap;left:44.60px;letter-spacing:-0.081px;">Apply Reverse</div>
<div style="position:absolute;top:198px;line-height:20px;font-size:11.5px;color:#3a3a3a;white-space:nowrap;left:44.60px;letter-spacing:0.300px;transform:scaleX(1.0265);transform-origin:0 0;">Apply Mute</div>
</div>
<svg style="position:absolute;left:33px;top:187px" width="16" height="16" viewBox="0 0 16 16"><defs><linearGradient id="ta1" x1="0" y1="0" x2="0" y2="1"><stop offset="0" stop-color="#ffffff"/><stop offset="1" stop-color="#c8d6f0"/></linearGradient></defs><rect x="0.7" y="0.7" width="14.6" height="14.6" rx="1.6" fill="#f2f4f8" stroke="#4e5668" stroke-width="1.3"/><rect x="2.4" y="2.4" width="11.2" height="11.2" fill="url(#ta1)" stroke="#6e7a98" stroke-width=".9"/><path d="M2.8 13.2 C5 7.4 8 4.4 13 3" fill="none" stroke="#3a5ea8" stroke-width="1.2"/><path d="M8.6 4.4 V13.4" stroke="#2a3350" stroke-width="1.3"/><path d="M6.6 5.8 L8.6 2.6 L10.6 5.8 Z" fill="#e8502a"/></svg>
<svg style="position:absolute;left:33px;top:205px" width="16" height="16" viewBox="0 0 16 16"><defs><radialGradient id="td1" cx=".4" cy=".35" r=".75"><stop offset="0" stop-color="#8fb8f4"/><stop offset="1" stop-color="#2a58b8"/></radialGradient></defs><rect x="6.6" y="0.2" width="3" height="2.2" fill="#6a7ea8"/><path d="M12.4 2.4 L13.8 3.8" stroke="#6a7ea8" stroke-width="1.3"/><circle cx="8" cy="8.9" r="6.6" fill="#dfe7f6" stroke="#5a74ac" stroke-width="1.1"/><circle cx="8" cy="8.9" r="4.9" fill="url(#td1)" stroke="#2d55a8" stroke-width=".7"/><path d="M8 5.6 V9 H11" fill="none" stroke="#f0a040" stroke-width="1.2"/><circle cx="8" cy="9" r="1.2" fill="#e8501e"/></svg>
<svg style="position:absolute;left:33px;top:223px" width="16" height="16" viewBox="0 0 16 16"><defs><linearGradient id="tf1" x1="0" y1="0" x2="0" y2="1"><stop offset="0" stop-color="#fdfdfd"/><stop offset="1" stop-color="#bfc1c8"/></linearGradient></defs><rect x="0.7" y="0.7" width="14.6" height="14.6" rx="1.6" fill="url(#tf1)" stroke="#55585f" stroke-width="1.1"/><path d="M4 2.4 V13.6 M8 2.4 V13.6 M12 2.4 V13.6" stroke="#3c3e46" stroke-width="1.1" stroke-dasharray="1.4 .8"/><rect x="2.6" y="4" width="2.8" height="2.6" fill="#fff" stroke="#666" stroke-width=".5"/><rect x="6.6" y="10" width="2.8" height="2.6" fill="#f08a1e" stroke="#8a4a10" stroke-width=".5"/><rect x="10.6" y="4.4" width="2.8" height="2.6" fill="#56b43a" stroke="#2a6a1a" stroke-width=".5"/></svg>
<svg style="position:absolute;left:33px;top:241px" width="16" height="16" viewBox="0 0 16 16"><path d="M1.4 9.4 C1.4 5.2 8.2 5.2 8.2 9.4 Z" fill="#3a7ad0"/><circle cx="4.8" cy="3.5" r="2.8" fill="#f0b478"/><path d="M1.6999999999999997 3.8000000000000003 A3.1 3.3 0 0 1 7.9 3.8000000000000003 Q6.3 2.0 4.8 2.6 Q3.3 2.0 1.6999999999999997 3.8000000000000003Z" fill="#a04a1c"/><path d="M7.799999999999999 9.4 C7.799999999999999 5.2 14.6 5.2 14.6 9.4 Z" fill="#3a7ad0"/><circle cx="11.2" cy="3.5" r="2.8" fill="#f0b478"/><path d="M8.1 3.8000000000000003 A3.1 3.3 0 0 1 14.299999999999999 3.8000000000000003 Q12.7 2.0 11.2 2.6 Q9.7 2.0 8.1 3.8000000000000003Z" fill="#a04a1c"/><path d="M-0.2999999999999998 15.600000000000001 C-0.2999999999999998 11.4 6.5 11.4 6.5 15.600000000000001 Z" fill="#3a7ad0"/><circle cx="3.1" cy="9.700000000000001" r="2.8" fill="#f0b478"/><path d="M0.0 10.0 A3.1 3.3 0 0 1 6.2 10.0 Q4.6 8.200000000000001 3.1 8.8 Q1.6 8.200000000000001 0.0 10.0Z" fill="#a04a1c"/><path d="M9.5 15.600000000000001 C9.5 11.4 16.3 11.4 16.3 15.600000000000001 Z" fill="#3a7ad0"/><circle cx="12.9" cy="9.700000000000001" r="2.8" fill="#f0b478"/><path d="M9.8 10.0 A3.1 3.3 0 0 1 16.0 10.0 Q14.4 8.200000000000001 12.9 8.8 Q11.4 8.200000000000001 9.8 10.0Z" fill="#a04a1c"/><path d="M4.43 16.21 C4.43 11.799999999999999 11.57 11.799999999999999 11.57 16.21 Z" fill="#e8b428"/><circle cx="8" cy="10.014999999999999" r="2.94" fill="#f0b478"/><path d="M4.744999999999999 10.33 A3.2550000000000003 3.465 0 0 1 11.255 10.33 Q9.575 8.44 8 9.069999999999999 Q6.425 8.44 4.744999999999999 10.33Z" fill="#a04a1c"/></svg>
<svg style="position:absolute;left:33px;top:259px" width="16" height="16" viewBox="0 0 16 16"><defs><linearGradient id="tr1" x1="0" y1="0" x2="1" y2="1"><stop offset="0" stop-color="#1c3a5c"/><stop offset="1" stop-color="#3f8a9a"/></linearGradient></defs><rect x="0.7" y="0.7" width="14.6" height="13.6" rx="1.4" fill="#d2d4da" stroke="#6e7480" stroke-width="1"/><rect x="2.4" y="2.4" width="11.2" height="10.2" fill="url(#tr1)"/><path d="M3 11 L6 6 L8 8 L11 3.4 M4 4 h.8 M9.6 10.4 h.8 M6 10 h.8 M11.6 7 h.8 M4.4 7.6 h.8" stroke="#bfe6f0" stroke-width=".8" fill="none"/><circle cx="11.9" cy="12" r="3.8" fill="#f07a28" stroke="#c2521a" stroke-width=".7"/><path d="M10.3 10.4 L13.5 13.6 M13.5 10.4 L10.3 13.6" stroke="#fff" stroke-width="1.3"/></svg>
<svg style="position:absolute;left:33px;top:277px" width="16" height="16" viewBox="0 0 16 16"><path d="M6.6 0.6 C11.4 1.4 14 4 14.8 8 M5.4 2.8 C9.4 3.4 11.8 5.6 12.6 9.2 M4.6 5 C7.6 5.6 9.4 7.2 10.2 10" fill="none" stroke="#4aa83a" stroke-width="1.4"/><path d="M15.4 9.6 C12 10 9.6 12.2 8.8 15.6 M13.2 8.6 C9.4 9.4 7 11.8 6.4 15.6 M15.6 12.2 C13.6 12.8 12.2 14 11.6 15.8" fill="none" stroke="#2a5cb0" stroke-width="1.4"/><path d="M0.5 6.6 H5.2 V4 L9.8 8.4 L5.2 12.8 V10.2 H0.5 Z" fill="#f59a32" stroke="#c8621a" stroke-width=".8"/></svg>
<svg style="position:absolute;left:33px;top:295px" width="16" height="16" viewBox="0 0 16 16"><path d="M11.6 12.4 L4.1 4.6" stroke="#4cb03a" stroke-width="3.2" stroke-linecap="round"/><path d="M1.2 1.6 L7.0 1.9 L1.2 7.4 Z" fill="#4cb03a" stroke="#2a7a1e" stroke-width=".5"/><path d="M4.4 12.4 L11.9 4.6" stroke="#2a62c0" stroke-width="3.2" stroke-linecap="round"/><path d="M14.8 1.6 L14.8 7.4 L9.0 1.9 Z" fill="#2a62c0" stroke="#1a4490" stroke-width=".5"/><path d="M8.0 8.0 L4.2 11.8" stroke="#2a62c0" stroke-width="3.2" stroke-linecap="round"/><path d="M1.2 14.8 L1.3 9.0 L7.0 14.7 Z" fill="#2a62c0" stroke="#1a4490" stroke-width=".5"/><path d="M8.0 8.0 L11.8 11.8" stroke="#4cb03a" stroke-width="3.2" stroke-linecap="round"/><path d="M14.8 14.8 L9.0 14.7 L14.7 9.0 Z" fill="#4cb03a" stroke="#2a7a1e" stroke-width=".5"/><path d="M0.4 7.2 H15.6" stroke="#f08a28" stroke-width="1.1"/></svg>
<svg style="position:absolute;left:33px;top:313px" width="16" height="16" viewBox="0 0 16 16"><path d="M0.6 4.6 V0.6 H4.6 M11.4 0.6 H15.4 V4.6 M15.4 11.4 V15.4 H11.4 M4.6 15.4 H0.6 V11.4" fill="none" stroke="#f59030" stroke-width="1.5"/><path d="M1 1 L4 4 M15 1 L12 4 M15 15 L12 12 M1 15 L4 12" stroke="#f59030" stroke-width="1.2"/><path d="M7.4 11.4 V3.4 L11.6 2.4 V5.6 C11.6 5.6 13 6.6 12.6 8.6 C12 6.8 9 6.6 9 6.4 V11.8" fill="#3a86e0" stroke="#1f5ab4" stroke-width=".8"/><ellipse cx="6.8" cy="11.8" rx="2.5" ry="2" fill="#4a96ea" stroke="#1f5ab4" stroke-width=".8"/></svg>
<svg style="position:absolute;left:33px;top:331px" width="16" height="16" viewBox="0 0 16 16"><path d="M3.6 0.7 H11.6 L15.3 4.4 V15.3 H3.6 Z" fill="#f4f4f6" stroke="#9a9aa2" stroke-width=".9"/><path d="M11.6 0.7 V4.4 H15.3" fill="#e0e0e4" stroke="#9a9aa2" stroke-width=".8"/><path d="M4.4 8.6 L6 5.6 L7.4 7.6 L9 5 L10.4 7.4 L12 5.6 L13.4 7.8 L14.6 7 V11 L13.4 10 L12 12.4 L10.4 10.4 L9 12.6 L7.4 10.2 L6 12 L4.4 9.6 Z" fill="#9a78e0"/><path d="M4 14.4 H15" stroke="#c8c8d0" stroke-width="1"/><path d="M0.5 7.4 H5 V4.8 L9.4 9 L5 13.2 V10.6 H0.5 Z" fill="#f59a32" stroke="#c8621a" stroke-width=".8"/></svg>
<svg style="position:absolute;left:33px;top:349px" width="16" height="16" viewBox="0 0 16 16"><path d="M13.0 14.0 L4.5 4.0" stroke="#5ab848" stroke-width="2.6" stroke-linecap="round"/><path d="M2.2 1.2 L7.1 1.7 L1.9 6.2 Z" fill="#5ab848" stroke="#2e8022" stroke-width=".5"/><path d="M8 8.6 C10 10 11.6 11.6 12.6 14.6" stroke="#2456b0" stroke-width="3" fill="none"/><path d="M9.4 15.8 H15.8 V10.6 Z" fill="#2456b0"/><path d="M2.6 14.2 L11.6 4.2" stroke="#f08a28" stroke-width="3" stroke-linecap="round"/><path d="M14.2 1.4 L14.3 6.6 L9.0 1.8 Z" fill="#f08a28" stroke="#b85a14" stroke-width=".5"/><path d="M1 15.4 L6.8 15.2 L3 10.4 Z" fill="#f08a28" stroke="#b85a14" stroke-width=".5"/></svg>
<svg style="position:absolute;left:33px;top:367px" width="16" height="16" viewBox="0 0 16 16"><path d="M0.6 1 L2 6.4 L3.6 1.6 L5.4 6.8 L7.2 1.6 L9 6.8 L10.8 1.6 L12.6 6.4 L14 1" fill="none" stroke="#52b23e" stroke-width="1.2"/><path d="M13 3.6 C17 9 13.6 13.6 8.4 13 V15.6 L1.2 11.2 L8.4 6.6 V9.4 C11.6 10 14 7.6 13 3.6 Z" fill="#2458b8" stroke="#173e8a" stroke-width=".7"/><path d="M3.4 11 L7.6 8.4 V10.2 C10 10.8 12.4 10 13.4 8" fill="none" stroke="#7aa8ee" stroke-width=".9"/></svg>
<svg style="position:absolute;left:33px;top:385px" width="16" height="16" viewBox="0 0 16 16"><defs><linearGradient id="tm1" x1="0" y1="0" x2="0" y2="1"><stop offset="0" stop-color="#f4f4f4"/><stop offset="1" stop-color="#a8aaae"/></linearGradient></defs><rect x="0.7" y="0.7" width="14.6" height="14.6" rx="1.4" fill="url(#tm1)" stroke="#70747c" stroke-width="1"/><path d="M8 1 V15" stroke="#70747c" stroke-width="1.1"/><path d="M3 4.6 L6.6 8 L3 11.4 Z" fill="#fbd0a0" stroke="#f07818" stroke-width="1.4"/><path d="M9 8.6 H15" stroke="#6ab04a" stroke-width="1.3"/><rect x="8.6" y="9.4" width="6.2" height="5.2" fill="#8e9296" opacity=".55"/><path d="M2.2 2.4 h.9 M5.6 2.4 h.9 M10 2.4 h.9 M13 2.4 h.9 M2.2 13.6 h.9 M5.6 13.6 h.9 M10 13.6 h.9 M13 13.6 h.9" stroke="#444" stroke-width=".9"/></svg>
<div style="position:absolute;left:216px;top:153px;width:683px;height:1px;background:#c9c9c9;"></div>
<div style="position:absolute;left:216px;top:153px;width:1px;height:247px;background:#c9c9c9;"></div>
<div style="position:absolute;left:216px;top:399px;width:683px;height:1px;background:#c9c9c9;"></div>
<div style="position:absolute;left:898px;top:153px;width:1px;height:247px;background:#d6d6d6;"></div>
<div style="position:absolute;left:220px;top:156px;width:624px;height:220px;background:#000;"></div>
<div style="position:absolute;left:845px;top:157px;width:1px;height:220px;background:#909090;"></div>
<div style="position:absolute;left:221px;top:157px;width:622px;height:5px;background:#5ae65a;"></div>
<div style="position:absolute;left:220px;top:163px;width:624px;height:1px;background:#f2f2f2;"></div>
<div style="position:absolute;left:220px;top:178px;width:624px;height:1px;background:#8c8c94;"></div>
<div style="position:absolute;left:220px;top:269px;width:624px;height:1px;background:#8c8c94;"></div>
<div style="position:absolute;left:220px;top:362px;width:624px;height:1px;background:#8c8c94;"></div>
<svg style="position:absolute;left:846px;top:155px" width="10" height="225" viewBox="0 0 10 225">
<rect x="0" y="15" width="6" height="1" fill="#000"/>
<rect x="0" y="22" width="3" height="1" fill="#000"/>
<rect x="0" y="29" width="6" height="1" fill="#000"/>
<rect x="0" y="36" width="3" height="1" fill="#000"/>
<rect x="0" y="43" width="6" height="1" fill="#000"/>
<rect x="0" y="51" width="3" height="1" fill="#000"/>
<rect x="0" y="58" width="6" height="1" fill="#000"/>
<rect x="0" y="65" width="3" height="1" fill="#000"/>
<rect x="0" y="72" width="6" height="1" fill="#000"/>
<rect x="0" y="79" width="3" height="1" fill="#000"/>
<rect x="0" y="86" width="6" height="1" fill="#000"/>
<rect x="0" y="93" width="3" height="1" fill="#000"/>
<rect x="0" y="101" width="6" height="1" fill="#000"/>
<rect x="0" y="108" width="3" height="1" fill="#000"/>
<rect x="0" y="115" width="6" height="1" fill="#000"/>
<rect x="0" y="122" width="3" height="1" fill="#000"/>
<rect x="0" y="129" width="6" height="1" fill="#000"/>
<rect x="0" y="136" width="3" height="1" fill="#000"/>
<rect x="0" y="143" width="6" height="1" fill="#000"/>
<rect x="0" y="151" width="3" height="1" fill="#000"/>
<rect x="0" y="158" width="6" height="1" fill="#000"/>
<rect x="0" y="165" width="3" height="1" fill="#000"/>
<rect x="0" y="172" width="6" height="1" fill="#000"/>
<rect x="0" y="179" width="3" height="1" fill="#000"/>
<rect x="0" y="186" width="6" height="1" fill="#000"/>
<rect x="0" y="193" width="3" height="1" fill="#000"/>
<rect x="0" y="201" width="6" height="1" fill="#000"/>
<rect x="0" y="208" width="3" height="1" fill="#000"/>
<rect x="0" y="215" width="6" height="1" fill="#000"/>
</svg>
<div style="position:absolute;top:150px;line-height:20px;font-size:9.5px;color:#000;white-space:nowrap;-webkit-text-stroke:0.25px #000;left:855.2px;">dB</div>
<div style="position:absolute;top:175px;line-height:20px;font-size:9.5px;color:#000;white-space:nowrap;-webkit-text-stroke:0.25px #000;letter-spacing:-0.2px;left:858px;">-1</div>
<div style="position:absolute;top:189px;line-height:20px;font-size:9.5px;color:#000;white-space:nowrap;-webkit-text-stroke:0.25px #000;letter-spacing:-0.2px;left:858px;">-2</div>
<div style="position:absolute;top:204px;line-height:20px;font-size:9.5px;color:#000;white-space:nowrap;-webkit-text-stroke:0.25px #000;letter-spacing:-0.2px;left:858px;">-4</div>
<div style="position:absolute;top:218px;line-height:20px;font-size:9.5px;color:#000;white-space:nowrap;-webkit-text-stroke:0.25px #000;letter-spacing:-0.2px;left:858px;">-7</div>
<div style="position:absolute;top:232px;line-height:20px;font-size:9.5px;color:#000;white-space:nowrap;-webkit-text-stroke:0.25px #000;letter-spacing:-0.2px;left:858px;">-10</div>
<div style="position:absolute;top:247px;line-height:20px;font-size:9.5px;color:#000;white-space:nowrap;-webkit-text-stroke:0.25px #000;letter-spacing:-0.2px;left:858px;">-16</div>
<div style="position:absolute;top:261px;line-height:20px;font-size:9.5px;color:#000;white-space:nowrap;-webkit-text-stroke:0.25px #000;letter-spacing:-0.2px;left:858px;">-90</div>
<div style="position:absolute;top:275px;line-height:20px;font-size:9.5px;color:#000;white-space:nowrap;-webkit-text-stroke:0.25px #000;letter-spacing:-0.2px;left:858px;">-16</div>
<div style="position:absolute;top:290px;line-height:20px;font-size:9.5px;color:#000;white-space:nowrap;-webkit-text-stroke:0.25px #000;letter-spacing:-0.2px;left:858px;">-10</div>
<div style="position:absolute;top:304px;line-height:20px;font-size:9.5px;color:#000;white-space:nowrap;-webkit-text-stroke:0.25px #000;letter-spacing:-0.2px;left:858px;">-7</div>
<div style="position:absolute;top:318px;line-height:20px;font-size:9.5px;color:#000;white-space:nowrap;-webkit-text-stroke:0.25px #000;letter-spacing:-0.2px;left:858px;">-4</div>
<div style="position:absolute;top:332px;line-height:20px;font-size:9.5px;color:#000;white-space:nowrap;-webkit-text-stroke:0.25px #000;letter-spacing:-0.2px;left:858px;">-2</div>
<div style="position:absolute;top:347px;line-height:20px;font-size:9.5px;color:#000;white-space:nowrap;-webkit-text-stroke:0.25px #000;letter-spacing:-0.2px;left:858px;">-1</div>
<div style="position:absolute;left:880px;top:155px;width:17px;height:243px;background:#000;"></div>
<svg style="position:absolute;left:220px;top:377px" width="626" height="8" viewBox="0 0 626 8">
<rect x="0" y="1" width="1" height="6" fill="#000"/>
<rect x="6" y="1" width="1" height="3" fill="#000"/>
<rect x="13" y="1" width="1" height="3" fill="#000"/>
<rect x="19" y="1" width="1" height="3" fill="#000"/>
<rect x="25" y="1" width="1" height="3" fill="#000"/>
<rect x="31" y="1" width="1" height="3" fill="#000"/>
<rect x="37" y="1" width="1" height="3" fill="#000"/>
<rect x="44" y="1" width="1" height="3" fill="#000"/>
<rect x="50" y="1" width="1" height="3" fill="#000"/>
<rect x="56" y="1" width="1" height="3" fill="#000"/>
<rect x="62" y="1" width="1" height="6" fill="#000"/>
<rect x="69" y="1" width="1" height="3" fill="#000"/>
<rect x="75" y="1" width="1" height="3" fill="#000"/>
<rect x="81" y="1" width="1" height="3" fill="#000"/>
<rect x="87" y="1" width="1" height="3" fill="#000"/>
<rect x="94" y="1" width="1" height="3" fill="#000"/>
<rect x="100" y="1" width="1" height="3" fill="#000"/>
<rect x="106" y="1" width="1" height="3" fill="#000"/>
<rect x="112" y="1" width="1" height="3" fill="#000"/>
<rect x="118" y="1" width="1" height="3" fill="#000"/>
<rect x="125" y="1" width="1" height="6" fill="#000"/>
<rect x="131" y="1" width="1" height="3" fill="#000"/>
<rect x="137" y="1" width="1" height="3" fill="#000"/>
<rect x="143" y="1" width="1" height="3" fill="#000"/>
<rect x="150" y="1" width="1" height="3" fill="#000"/>
<rect x="156" y="1" width="1" height="3" fill="#000"/>
<rect x="162" y="1" width="1" height="3" fill="#000"/>
<rect x="168" y="1" width="1" height="3" fill="#000"/>
<rect x="175" y="1" width="1" height="3" fill="#000"/>
<rect x="181" y="1" width="1" height="3" fill="#000"/>
<rect x="187" y="1" width="1" height="6" fill="#000"/>
<rect x="193" y="1" width="1" height="3" fill="#000"/>
<rect x="199" y="1" width="1" height="3" fill="#000"/>
<rect x="206" y="1" width="1" height="3" fill="#000"/>
<rect x="212" y="1" width="1" height="3" fill="#000"/>
<rect x="218" y="1" width="1" height="3" fill="#000"/>
<rect x="224" y="1" width="1" height="3" fill="#000"/>
<rect x="231" y="1" width="1" height="3" fill="#000"/>
<rect x="237" y="1" width="1" height="3" fill="#000"/>
<rect x="243" y="1" width="1" height="3" fill="#000"/>
<rect x="249" y="1" width="1" height="6" fill="#000"/>
<rect x="256" y="1" width="1" height="3" fill="#000"/>
<rect x="262" y="1" width="1" height="3" fill="#000"/>
<rect x="268" y="1" width="1" height="3" fill="#000"/>
<rect x="274" y="1" width="1" height="3" fill="#000"/>
<rect x="280" y="1" width="1" height="3" fill="#000"/>
<rect x="287" y="1" width="1" height="3" fill="#000"/>
<rect x="293" y="1" width="1" height="3" fill="#000"/>
<rect x="299" y="1" width="1" height="3" fill="#000"/>
<rect x="305" y="1" width="1" height="3" fill="#000"/>
<rect x="312" y="1" width="1" height="6" fill="#000"/>
<rect x="318" y="1" width="1" height="3" fill="#000"/>
<rect x="324" y="1" width="1" height="3" fill="#000"/>
<rect x="330" y="1" width="1" height="3" fill="#000"/>
<rect x="337" y="1" width="1" height="3" fill="#000"/>
<rect x="343" y="1" width="1" height="3" fill="#000"/>
<rect x="349" y="1" width="1" height="3" fill="#000"/>
<rect x="355" y="1" width="1" height="3" fill="#000"/>
<rect x="361" y="1" width="1" height="3" fill="#000"/>
<rect x="368" y="1" width="1" height="3" fill="#000"/>
<rect x="374" y="1" width="1" height="6" fill="#000"/>
<rect x="380" y="1" width="1" height="3" fill="#000"/>
<rect x="386" y="1" width="1" height="3" fill="#000"/>
<rect x="393" y="1" width="1" height="3" fill="#000"/>
<rect x="399" y="1" width="1" height="3" fill="#000"/>
<rect x="405" y="1" width="1" height="3" fill="#000"/>
<rect x="411" y="1" width="1" height="3" fill="#000"/>
<rect x="418" y="1" width="1" height="3" fill="#000"/>
<rect x="424" y="1" width="1" height="3" fill="#000"/>
<rect x="430" y="1" width="1" height="3" fill="#000"/>
<rect x="436" y="1" width="1" height="6" fill="#000"/>
<rect x="443" y="1" width="1" height="3" fill="#000"/>
<rect x="449" y="1" width="1" height="3" fill="#000"/>
<rect x="455" y="1" width="1" height="3" fill="#000"/>
<rect x="461" y="1" width="1" height="3" fill="#000"/>
<rect x="467" y="1" width="1" height="3" fill="#000"/>
<rect x="474" y="1" width="1" height="3" fill="#000"/>
<rect x="480" y="1" width="1" height="3" fill="#000"/>
<rect x="486" y="1" width="1" height="3" fill="#000"/>
<rect x="492" y="1" width="1" height="3" fill="#000"/>
<rect x="499" y="1" width="1" height="6" fill="#000"/>
<rect x="505" y="1" width="1" height="3" fill="#000"/>
<rect x="511" y="1" width="1" height="3" fill="#000"/>
<rect x="517" y="1" width="1" height="3" fill="#000"/>
<rect x="524" y="1" width="1" height="3" fill="#000"/>
<rect x="530" y="1" width="1" height="3" fill="#000"/>
<rect x="536" y="1" width="1" height="3" fill="#000"/>
<rect x="542" y="1" width="1" height="3" fill="#000"/>
<rect x="548" y="1" width="1" height="3" fill="#000"/>
<rect x="555" y="1" width="1" height="3" fill="#000"/>
<rect x="561" y="1" width="1" height="6" fill="#000"/>
<rect x="567" y="1" width="1" height="3" fill="#000"/>
<rect x="573" y="1" width="1" height="3" fill="#000"/>
<rect x="580" y="1" width="1" height="3" fill="#000"/>
<rect x="586" y="1" width="1" height="3" fill="#000"/>
<rect x="592" y="1" width="1" height="3" fill="#000"/>
<rect x="598" y="1" width="1" height="3" fill="#000"/>
<rect x="605" y="1" width="1" height="3" fill="#000"/>
<rect x="611" y="1" width="1" height="3" fill="#000"/>
<rect x="617" y="1" width="1" height="3" fill="#000"/>
</svg>
<div style="position:absolute;top:381px;line-height:20px;font-size:9.5px;color:#000;white-space:nowrap;-webkit-text-stroke:0.25px #000;left:220.77px;letter-spacing:-0.150px;transform:scaleX(0.9928);transform-origin:0 0;">hms</div>
<div style="position:absolute;top:381px;line-height:20px;font-size:9.5px;color:#000;white-space:nowrap;-webkit-text-stroke:0.25px #000;left:132.60999999999996px;width:300px;text-align:center;">1</div>
<div style="position:absolute;top:381px;line-height:20px;font-size:9.5px;color:#000;white-space:nowrap;-webkit-text-stroke:0.25px #000;left:194.92000000000002px;width:300px;text-align:center;">2</div>
<div style="position:absolute;top:381px;line-height:20px;font-size:9.5px;color:#000;white-space:nowrap;-webkit-text-stroke:0.25px #000;left:257.22999999999996px;width:300px;text-align:center;">3</div>
<div style="position:absolute;top:381px;line-height:20px;font-size:9.5px;color:#000;white-space:nowrap;-webkit-text-stroke:0.25px #000;left:319.54px;width:300px;text-align:center;">4</div>
<div style="position:absolute;top:381px;line-height:20px;font-size:9.5px;color:#000;white-space:nowrap;-webkit-text-stroke:0.25px #000;left:381.85px;width:300px;text-align:center;">5</div>
<div style="position:absolute;top:381px;line-height:20px;font-size:9.5px;color:#000;white-space:nowrap;-webkit-text-stroke:0.25px #000;left:444.1600000000001px;width:300px;text-align:center;">6</div>
<div style="position:absolute;top:381px;line-height:20px;font-size:9.5px;color:#000;white-space:nowrap;-webkit-text-stroke:0.25px #000;left:506.47px;width:300px;text-align:center;">7</div>
<div style="position:absolute;top:381px;line-height:20px;font-size:9.5px;color:#000;white-space:nowrap;-webkit-text-stroke:0.25px #000;left:568.7800000000001px;width:300px;text-align:center;">8</div>
<div style="position:absolute;top:381px;line-height:20px;font-size:9.5px;color:#000;white-space:nowrap;-webkit-text-stroke:0.25px #000;left:631.09px;width:300px;text-align:center;">9</div>
<div style="position:absolute;left:238px;top:412px;width:20px;height:20px;box-sizing:border-box;border-radius:2px;background:linear-gradient(#f4f4f4,#e2e2e2);border:1px solid #c9c9c9;box-shadow:0 1px 1px #bbb"></div>
<svg style="position:absolute;left:238px;top:412px" width="20" height="20" viewBox="0 0 20 20"><path d="M7.2 5.4 L14.6 10.2 L7.2 15 Z" fill="#a9a9a9"/></svg>
<div style="position:absolute;left:262px;top:412px;width:20px;height:20px;box-sizing:border-box;border-radius:2px;background:linear-gradient(#f4f4f4,#e2e2e2);border:1px solid #c9c9c9;box-shadow:0 1px 1px #bbb"></div>
<svg style="position:absolute;left:262px;top:412px" width="20" height="20" viewBox="0 0 20 20"><path d="M6 8.2 H11.6 V6 L15 8.8 L11.6 11 V9.6 H6 Z" fill="#a9a9a9" transform="translate(0 -1.2)"/><path d="M14 11.6 H8.4 V10 L5 12.6 L8.4 15.2 V13.4 H14 Z" fill="#a9a9a9" transform="translate(0 .2)"/></svg>
<div style="position:absolute;left:286px;top:412px;width:20px;height:20px;box-sizing:border-box;border-radius:2px;background:linear-gradient(#f4f4f4,#e2e2e2);border:1px solid #c9c9c9;box-shadow:0 1px 1px #bbb"></div>
<svg style="position:absolute;left:286px;top:412px" width="20" height="20" viewBox="0 0 20 20"><circle cx="10" cy="10.2" r="4.8" fill="#a9a9a9"/><path d="M8.6 7.4 L12.8 10.2 L8.6 13 Z" fill="#ececec"/></svg>
<div style="position:absolute;left:310px;top:412px;width:20px;height:20px;box-sizing:border-box;border-radius:2px;background:linear-gradient(#f4f4f4,#e2e2e2);border:1px solid #c9c9c9;box-shadow:0 1px 1px #bbb"></div>
<svg style="position:absolute;left:310px;top:412px" width="20" height="20" viewBox="0 0 20 20"><path d="M10.2 5.6 V14.8 L4.2 10.2 Z M16 5.6 V14.8 L10 10.2 Z" fill="#a9a9a9"/></svg>
<div style="position:absolute;left:334px;top:412px;width:20px;height:20px;box-sizing:border-box;border-radius:2px;background:linear-gradient(#f4f4f4,#e2e2e2);border:1px solid #c9c9c9;box-shadow:0 1px 1px #bbb"></div>
<svg style="position:absolute;left:334px;top:412px" width="20" height="20" viewBox="0 0 20 20"><path d="M4.4 5.6 V14.8 L10.4 10.2 Z M10.2 5.6 V14.8 L16.2 10.2 Z" fill="#a9a9a9"/></svg>
<div style="position:absolute;left:238px;top:444px;width:20px;height:20px;box-sizing:border-box;border-radius:2px;background:linear-gradient(#f4f4f4,#e2e2e2);border:1px solid #c9c9c9;box-shadow:0 1px 1px #bbb"></div>
<svg style="position:absolute;left:238px;top:444px" width="20" height="20" viewBox="0 0 20 20"><rect x="6.8" y="7" width="6.2" height="6" fill="#a9a9a9"/></svg>
<div style="position:absolute;left:262px;top:444px;width:20px;height:20px;box-sizing:border-box;border-radius:2px;background:linear-gradient(#f4f4f4,#e2e2e2);border:1px solid #c9c9c9;box-shadow:0 1px 1px #bbb"></div>
<svg style="position:absolute;left:262px;top:444px" width="20" height="20" viewBox="0 0 20 20"><rect x="6" y="5.4" width="3.2" height="9.6" fill="#a9a9a9"/><rect x="11.2" y="5.4" width="3.2" height="9.6" fill="#a9a9a9"/></svg>
<div style="position:absolute;left:286px;top:444px;width:20px;height:20px;box-sizing:border-box;border-radius:2px;background:linear-gradient(#dbe8f5,#a9c8e6);border:1px solid #4a86c5;box-shadow:0 1px 1px #9ab"></div>
<svg style="position:absolute;left:286px;top:444px" width="20" height="20" viewBox="0 0 20 20"><defs><radialGradient id="grc" cx=".4" cy=".3" r=".8"><stop offset="0" stop-color="#f06050"/><stop offset=".6" stop-color="#d01818"/><stop offset="1" stop-color="#a01010"/></radialGradient></defs><circle cx="10" cy="10.2" r="4.6" fill="url(#grc)"/><ellipse cx="10" cy="8.4" rx="2.6" ry="1.1" fill="#f8a8a0" opacity=".7"/></svg>
<div style="position:absolute;left:310px;top:444px;width:20px;height:20px;box-sizing:border-box;border-radius:2px;background:linear-gradient(#f4f4f4,#e2e2e2);border:1px solid #c9c9c9;box-shadow:0 1px 1px #bbb"></div>
<svg style="position:absolute;left:310px;top:444px" width="20" height="20" viewBox="0 0 20 20"><rect x="5.6" y="5.6" width="2.2" height="9.2" fill="#a9a9a9"/><path d="M15 5.6 V14.8 L8 10.2 Z" fill="#a9a9a9"/></svg>
<div style="position:absolute;left:334px;top:444px;width:20px;height:20px;box-sizing:border-box;border-radius:2px;background:linear-gradient(#f4f4f4,#e2e2e2);border:1px solid #c9c9c9;box-shadow:0 1px 1px #bbb"></div>
<svg style="position:absolute;left:334px;top:444px" width="20" height="20" viewBox="0 0 20 20"><rect x="12.4" y="5.6" width="2.2" height="9.2" fill="#a9a9a9"/><path d="M5.2 5.6 V14.8 L12.2 10.2 Z" fill="#a9a9a9"/></svg>
<div style="position:absolute;left:377px;top:408px;width:1px;height:64px;background:#e4e4e4;"></div>
<div style="position:absolute;left:509px;top:408px;width:1px;height:64px;background:#e4e4e4;"></div>
<div style="position:absolute;left:601px;top:408px;width:1px;height:64px;background:#e4e4e4;"></div>
<svg style="position:absolute;left:395px;top:415px" width="16" height="16" viewBox="0 0 16 16"><circle cx="5.8" cy="5.9" r="5.2" fill="#f1f1f1" stroke="#adadad" stroke-width="1"/><path d="M3.3 5.6000000000000005 h5" stroke="#dadada" stroke-width="1"/><path d="M9.44 9.54 L12 12" stroke="#a8a8a8" stroke-width="1.4"/><path d="M11.4 11.5 L14.3 14.5" stroke="#9c9c9c" stroke-width="3.3" stroke-linecap="round"/><path d="M8.4 4.4 H16 M12.2 0.6 V8.2" stroke="#a8a8a8" stroke-width="2.4"/></svg>
<svg style="position:absolute;left:419px;top:415px" width="16" height="16" viewBox="0 0 16 16"><circle cx="5.8" cy="5.9" r="5.2" fill="#f1f1f1" stroke="#adadad" stroke-width="1"/><path d="M3.3 5.6000000000000005 h5" stroke="#dadada" stroke-width="1"/><path d="M9.44 9.54 L12 12" stroke="#a8a8a8" stroke-width="1.4"/><path d="M11.4 11.5 L14.3 14.5" stroke="#9c9c9c" stroke-width="3.3" stroke-linecap="round"/><path d="M8 4.4 H16" stroke="#a8a8a8" stroke-width="2.4"/></svg>
<svg style="position:absolute;left:443px;top:415px" width="16" height="16" viewBox="0 0 16 16"><path d="M3 14.5 H15.5 V0.6 H8" fill="none" stroke="#8c8c8c" stroke-width="1" stroke-dasharray="1.6 1.2"/><circle cx="6" cy="6" r="5.2" fill="#f1f1f1" stroke="#adadad" stroke-width="1"/><path d="M3.5 5.7 h5" stroke="#dadada" stroke-width="1"/><path d="M9.64 9.64 L12 12" stroke="#a8a8a8" stroke-width="1.4"/><path d="M11.4 11.5 L14.3 14.5" stroke="#9c9c9c" stroke-width="3.3" stroke-linecap="round"/></svg>
<svg style="position:absolute;left:467px;top:415px" width="16" height="16" viewBox="0 0 16 16"><circle cx="5.8" cy="6" r="5.2" fill="#f1f1f1" stroke="#adadad" stroke-width="1"/><path d="M3.3 5.7 h5" stroke="#dadada" stroke-width="1"/><path d="M9.44 9.64 L12 12" stroke="#a8a8a8" stroke-width="1.4"/><path d="M11.4 11.5 L14.3 14.5" stroke="#9c9c9c" stroke-width="3.3" stroke-linecap="round"/><path d="M3 6 H8.6 M5.8 3.2 V8.8" stroke="#8e8e8e" stroke-width="1.7"/><path d="M13.2 2.5 V11" stroke="#a2a2a2" stroke-width="1.8"/><path d="M10.2 4 L13.2 0.2 L16.2 4 Z" fill="#a2a2a2"/><path d="M10.799999999999999 9.4 L13.2 12.6 L15.6 9.4 Z" fill="#a2a2a2"/></svg>
<svg style="position:absolute;left:395px;top:447px" width="16" height="16" viewBox="0 0 16 16"><circle cx="7" cy="6.2" r="5" fill="#f1f1f1" stroke="#adadad" stroke-width="1"/><path d="M4.5 5.9 h5" stroke="#dadada" stroke-width="1"/><path d="M10.5 9.7 L12 12" stroke="#a8a8a8" stroke-width="1.4"/><path d="M11.4 11.5 L14.3 14.5" stroke="#9c9c9c" stroke-width="3.3" stroke-linecap="round"/><path d="M5 0.8 H1.2 V14.6 H5" fill="none" stroke="#a4a4a4" stroke-width="1.6"/></svg>
<svg style="position:absolute;left:419px;top:447px" width="16" height="16" viewBox="0 0 16 16"><circle cx="5.8" cy="6" r="5.2" fill="#f1f1f1" stroke="#adadad" stroke-width="1"/><path d="M3.3 5.7 h5" stroke="#dadada" stroke-width="1"/><path d="M9.44 9.64 L12 12" stroke="#a8a8a8" stroke-width="1.4"/><path d="M11.4 11.5 L14.3 14.5" stroke="#9c9c9c" stroke-width="3.3" stroke-linecap="round"/><path d="M2.6 6 H9" stroke="#8e8e8e" stroke-width="1.6"/><path d="M9.6 2.4 L13 0.6 L15.4 4 L13.6 4.6 L15.8 7.4 L12.6 9 L10.6 6.2 Z" fill="#b8b8b8" stroke="#9a9a9a" stroke-width=".6"/></svg>
<svg style="position:absolute;left:443px;top:447px" width="16" height="16" viewBox="0 0 16 16"><circle cx="8.6" cy="6.2" r="5" fill="#f1f1f1" stroke="#adadad" stroke-width="1"/><path d="M6.1 5.9 h5" stroke="#dadada" stroke-width="1"/><path d="M5.1 9.7 L4 12" stroke="#a8a8a8" stroke-width="1.4"/><path d="M4.6 11.5 L1.7 14.5" stroke="#9c9c9c" stroke-width="3.3" stroke-linecap="round"/><path d="M11 0.8 H14.8 V14.6 H11" fill="none" stroke="#a4a4a4" stroke-width="1.6"/></svg>
<svg style="position:absolute;left:467px;top:447px" width="16" height="16" viewBox="0 0 16 16"><circle cx="5.8" cy="6" r="5.2" fill="#f1f1f1" stroke="#adadad" stroke-width="1"/><path d="M3.3 5.7 h5" stroke="#dadada" stroke-width="1"/><path d="M9.44 9.64 L12 12" stroke="#a8a8a8" stroke-width="1.4"/><path d="M11.4 11.5 L14.3 14.5" stroke="#9c9c9c" stroke-width="3.3" stroke-linecap="round"/><path d="M3 6 H8.6" stroke="#8e8e8e" stroke-width="1.7"/><path d="M13.2 2.5 V11" stroke="#a2a2a2" stroke-width="1.8"/><path d="M10.2 4 L13.2 0.2 L16.2 4 Z" fill="#a2a2a2"/><path d="M10.799999999999999 9.4 L13.2 12.6 L15.6 9.4 Z" fill="#a2a2a2"/></svg>
<div style="position:absolute;top:430px;line-height:20px;font-size:16px;color:#888;white-space:nowrap;left:513.27px;letter-spacing:-0.073px;">0:00:00.000</div>
<div style="position:absolute;top:424px;line-height:20px;font-size:11.5px;color:#3c3c3c;white-space:nowrap;left:613.92px;letter-spacing:0.037px;">Selection:</div>
<div style="position:absolute;top:446px;line-height:20px;font-size:11.5px;color:#3c3c3c;white-space:nowrap;left:624.54px;letter-spacing:0.300px;transform:scaleX(1.0022);transform-origin:0 0;">Length:</div>
<div style="position:absolute;top:422px;line-height:20px;font-size:12px;color:#6c6c6c;white-space:nowrap;font-weight:bold;font-style:italic;left:683.00px;letter-spacing:0.240px;">0:00:00.000</div>
<div style="position:absolute;top:445px;line-height:20px;font-size:12px;color:#6c6c6c;white-space:nowrap;font-weight:bold;font-style:italic;left:683.00px;letter-spacing:0.240px;">0:00:00.000</div>
<div style="position:absolute;top:422px;line-height:20px;font-size:12px;color:#6c6c6c;white-space:nowrap;font-weight:bold;font-style:italic;left:779.00px;letter-spacing:0.240px;">0:00:00.000</div>
<div style="position:absolute;top:445px;line-height:20px;font-size:12px;color:#6c6c6c;white-space:nowrap;font-weight:bold;font-style:italic;left:779.00px;letter-spacing:0.240px;">0:00:00.000</div>
<div style="position:absolute;left:1px;top:480px;width:898px;height:19px;background:#2b579a;"></div>
</div></body></html>
